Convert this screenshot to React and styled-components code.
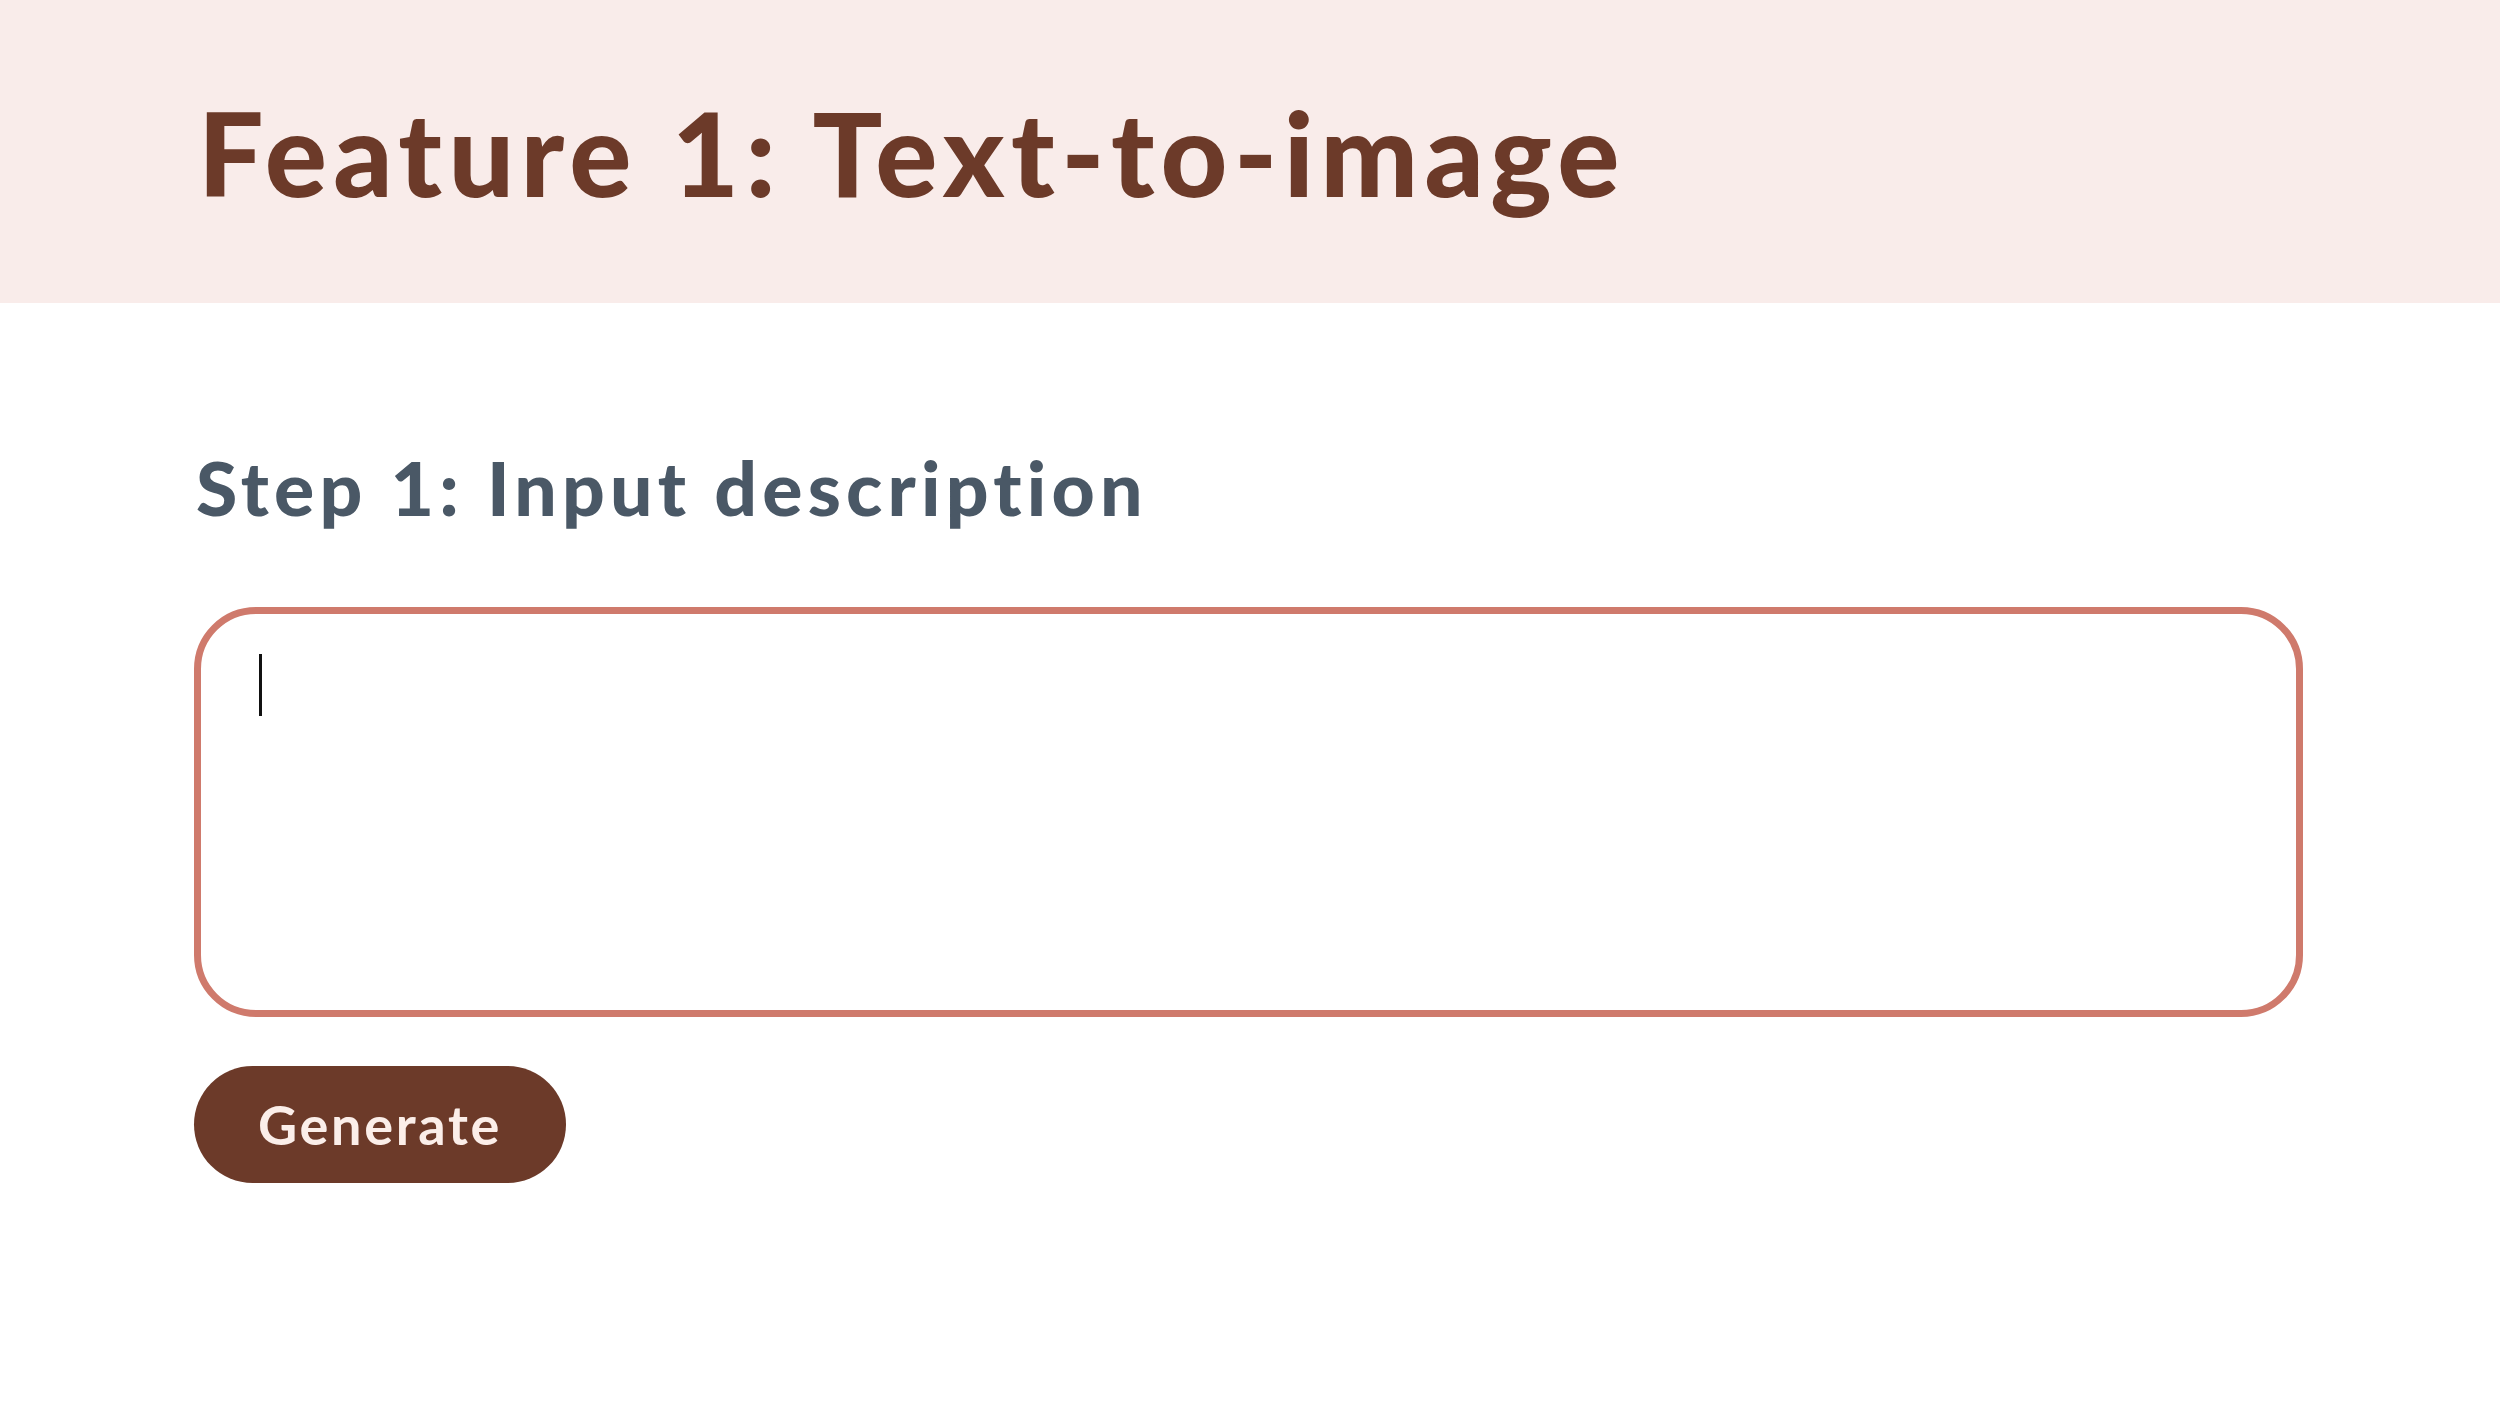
import React from "react";
import styled, { createGlobalStyle } from "styled-components";

const Global = createGlobalStyle`
  html, body { margin: 0; padding: 0; background: #ffffff; }
  body { font-family: "Lato", "Liberation Sans", sans-serif; }
  * { box-sizing: border-box; }
`;

const Page = styled.div`
  width: 2500px;
  min-height: 1406px;
  background: #ffffff;
`;

const Header = styled.header`
  height: 303px;
  background: #f9ecea;
  display: flex;
  align-items: flex-start;
  padding: 78px 0 0 198px;
`;

const Title = styled.h1`
  margin: 0;
  font-family: "Lato", sans-serif;
  font-weight: 900;
  font-size: 116px;
  line-height: 1.3;
  color: #6c3a29;
  letter-spacing: 6.4px;
`;

const Main = styled.main`
  padding: 0 197px 0 194px;
  display: flex;
  flex-direction: column;
  align-items: flex-start;
`;

const StepTitle = styled.h2`
  margin: 139px 0 0 0;
  font-family: "Lato", sans-serif;
  font-weight: 900;
  font-size: 75px;
  line-height: 1.2;
  color: #4a5866;
  padding-left: 2px;
  letter-spacing: 5.2px;
`;

const Field = styled.div`
  position: relative;
  margin-top: 75px;
  width: 100%;
`;

const Prompt = styled.textarea`
  display: block;
  width: 100%;
  height: 410px;
  border: 7px solid #cf7a6c;
  border-radius: 62px;
  padding: 42px 58px;
  font-family: "Lato", sans-serif;
  font-size: 52px;
  line-height: 1.2;
  color: #222;
  caret-color: transparent;
  resize: none;
  outline: none;
  background: #fff;
`;

const Caret = styled.span`
  position: absolute;
  left: 65px;
  top: 47px;
  width: 3px;
  height: 62px;
  background: #111;
  pointer-events: none;
`;

const Button = styled.button`
  margin-top: 49px;
  width: 372px;
  height: 117px;
  border: none;
  border-radius: 59px;
  background: #6c3a29;
  color: #fbeee9;
  font-family: "Lato", sans-serif;
  font-weight: 700;
  font-size: 54px;
  letter-spacing: 2.7px;
  cursor: pointer;
  display: flex;
  align-items: center;
  justify-content: center;
`;

export default function App() {
  return (
    <Page>
      <Global />
      <Header>
        <Title>Feature 1: Text-to-image</Title>
      </Header>
      <Main>
        <StepTitle>Step 1: Input description</StepTitle>
        <Field>
          <Prompt aria-label="Input description" />
          <Caret />
        </Field>
        <Button>Generate</Button>
      </Main>
    </Page>
  );
}
